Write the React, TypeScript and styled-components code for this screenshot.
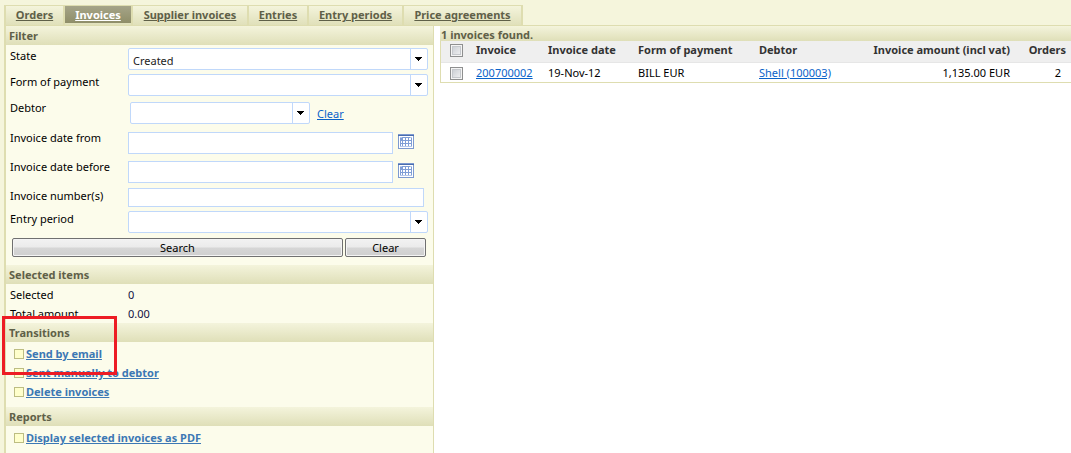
import React from 'react';
import styled, { createGlobalStyle } from 'styled-components';

const GlobalStyle = createGlobalStyle`
  * { box-sizing: border-box; }
  body {
    margin: 0;
    background: #f5f5dc;
    color: #000;
    font: 11px/19px "Noto Sans", "Open Sans", sans-serif;
  }
`;

const Page = styled.div`
  display: flex;
  flex-direction: column;
  min-height: 100vh;
  padding: 5px 0 0 4px;
`;

const Tabs = styled.nav`
  display: flex;
  margin-bottom: -1px;
`;

const TabItem = styled.div<{ $width: number }>`
  width: ${p => p.$width}px;
  height: 21px;
  border: solid #deddb0;
  border-width: 1px 2px 0 0;
  background: linear-gradient(#f4f4dc, #dfdfb8);
  &:first-child { border-left-width: 2px; }
`;

const Tab = styled.a<{ $active?: boolean }>`
  display: block;
  height: 17px;
  line-height: 18px;
  text-align: center;
  white-space: nowrap;
  font-weight: 700;
  color: ${p => (p.$active ? '#fff' : '#5f6048')};
  background: ${p => (p.$active ? 'linear-gradient(#a5a488, #8f8e68)' : 'none')};
`;

const Columns = styled.div`
  display: flex;
  flex: 1;
`;

const Sidebar = styled.aside`
  position: relative;
  flex: 0 0 429px;
  border: solid #deddb0;
  border-width: 1px 1px 0 2px;
  background: #fcfceb;
`;

const Heading = styled.h2`
  margin: 0;
  padding-left: 3px;
  height: 19px;
  font-size: 11px;
  line-height: 19px;
  color: #5f6048;
  background: linear-gradient(#f4f4dc, #dfdfb8);
`;

const Form = styled.form`
  padding: 1px 5px 8px 4px;
`;

const Row = styled.div<{ $height: number }>`
  display: grid;
  grid-template-columns: 118px 1fr;
  height: ${p => p.$height}px;
`;

const Label = styled.label`
  line-height: 20px;
`;

const Controls = styled.div<{ $indent?: number }>`
  display: flex;
  align-items: center;
  gap: 5px;
  padding-left: ${p => p.$indent ?? 0}px;
`;

const TextInput = styled.input<{ $width: number; $height: number }>`
  width: ${p => p.$width}px;
  height: ${p => p.$height}px;
  padding: 0 4px;
  border: 1px solid #c0d8fa;
  background: #fff;
  font: inherit;
`;

const SelectBox = styled.div<{ $width: number }>`
  display: grid;
  grid-template-columns: 1fr 17px;
  width: ${p => p.$width}px;
  height: 22px;
  border: 1px solid #c0d8fa;
  border-radius: 2px;
  background: #fff;
`;

const Select = styled.select`
  grid-area: 1 / 1 / 2 / 3;
  appearance: none;
  min-width: 0;
  height: 20px;
  padding: 3px 18px 0 4px;
  border: 0;
  background: none;
  color: #222;
  font: inherit;
  line-height: 17px;
`;

const ArrowCell = styled.span`
  grid-area: 1 / 2 / 2 / 3;
  display: flex;
  align-items: center;
  padding-left: 4px;
  border-left: 1px solid #c0d8fa;
  pointer-events: none;
`;

const ClearLink = styled.a`
  margin-left: 2px;
  color: #0a63c9;
`;

const IconButton = styled.button`
  display: flex;
  padding: 0 0 2px;
  border: 0;
  background: none;
`;

const Buttons = styled.div`
  display: grid;
  grid-template-columns: 1fr 81px;
  gap: 2px;
  padding: 3px 2px 0;
`;

const Button = styled.button`
  height: 19px;
  padding: 0;
  border: 1px solid #707070;
  border-radius: 2px;
  background: linear-gradient(#f2f2f2 0%, #ebebeb 48%, #d6d6d6 52%, #cfcfcf 100%);
  box-shadow: inset 0 0 0 1px #f4f4f4;
  font: inherit;
  line-height: 17px;
`;

const Summary = styled.dl`
  display: grid;
  grid-template-columns: 118px 1fr;
  grid-auto-rows: 19px;
  height: 39px;
  margin: 0;
  padding: 1px 0 0 4px;
`;

const Value = styled.dd`
  margin: 0;
  color: #111142;
`;

const Links = styled.ul`
  margin: 0;
  padding: 2px 0 6px 8px;
  list-style: none;
`;

const LinkItem = styled.li`
  display: flex;
  align-items: center;
  gap: 2px;
  height: 19px;
  &::before {
    content: '';
    width: 8px;
    height: 8px;
    border: 1px solid #bdbd82;
    background: #ffffcc;
  }
`;

const ActionLink = styled.a`
  font-weight: 700;
  color: #3c78b4;
`;

const TransitionGroup = styled.section`
  position: relative;
`;

const Highlight = styled.div`
  position: absolute;
  top: -7px;
  left: -4px;
  width: 115px;
  height: 59px;
  border: 3px solid #ed1c24;
  pointer-events: none;
`;

const Results = styled.main`
  flex: 1;
  min-width: 0;
  padding-left: 6px;
  background: linear-gradient(#fff, #fff) content-box, #fff;
  border-top: 1px solid #deddb0;
`;

const Table = styled.table`
  width: 100%;
  table-layout: fixed;
  border-collapse: separate;
  border-spacing: 0;
  border: solid #deddb0;
  border-width: 0 0 1px 1px;
  caption {
    padding-left: 1px;
    height: 15px;
    line-height: 17px;
    text-align: left;
    font-weight: 700;
    color: #5f6048;
    background: linear-gradient(#f4f4dc, #dfdfb8);
  }
`;

const HeadCell = styled.th<{ $right?: boolean }>`
  height: 22px;
  padding: 0 ${p => (p.$right ? 5 : 0)}px 3px 6px;
  border-bottom: 1px solid #e6e6e6;
  background: #efefef;
  text-align: ${p => (p.$right ? 'right' : 'left')};
  line-height: 18px;
  white-space: nowrap;
  color: #333;
`;

const Cell = styled.td<{ $right?: number }>`
  height: 19px;
  padding: 0 ${p => p.$right ?? 0}px 0 6px;
  text-align: ${p => (p.$right ? 'right' : 'left')};
  line-height: 18px;
  white-space: nowrap;
  a { color: #0a63c9; }
`;

const Check = styled.input`
  appearance: none;
  display: block;
  width: 13px;
  height: 13px;
  margin: 1px 0 0 3px;
  border: 1px solid #8e8f8f;
  background: linear-gradient(135deg, #c4c8ce, #f6f6f6);
  box-shadow: inset 0 0 0 1px #f4f4f4, inset 0 0 0 2px #c5c8cc;
`;

const Col = styled.col<{ $width?: number }>`
  width: ${p => (p.$width ? `${p.$width}px` : 'auto')};
`;

function Dropdown({ id, width, value = '' }: { id: string; width: number; value?: string }) {
  return (
    <SelectBox $width={width}>
      <Select id={id} defaultValue={value}>
        <option value={value}>{value}</option>
      </Select>
      <ArrowCell>
        <svg width="7" height="4" viewBox="0 0 7 4" shapeRendering="crispEdges" aria-hidden="true">
          <path d="M0 0h7v1h-1v1h-1v1h-1v1h-1v-1h-1v-1h-1v-1h-1z" />
        </svg>
      </ArrowCell>
    </SelectBox>
  );
}

function CalendarButton({ label }: { label: string }) {
  return (
    <IconButton type="button" aria-label={label}>
      <svg width="16" height="15" viewBox="0 0 16 15" shapeRendering="crispEdges" aria-hidden="true">
        <path d="M0 0h16v15H0z" fill="#7d9ad0" />
        <path d="M0 1h16v1H0z" fill="#4a6dae" />
        <path d="M1 2h14v12H1z" fill="#fff" />
        <path d="M2 3h12v10H2z" fill="#7f9ed6" />
        <path d="M2 3h2v1H2zM12 3h2v1h-2zM2 12h12v1H2z" fill="#b4c7ea" />
        <path d="M5 4h2v2H5zM8 4h2v2H8zM11 4h2v2h-2zM3 7h1v2H3zM5 7h2v2H5zM8 7h2v2H8zM11 7h2v2h-2zM3 10h1v2H3zM5 10h2v2H5zM8 10h2v2H8zM11 10h2v2h-2z" fill="#fff" />
      </svg>
    </IconButton>
  );
}

const tabs = [
  { name: 'Orders', width: 61 },
  { name: 'Invoices', width: 68 },
  { name: 'Supplier invoices', width: 116 },
  { name: 'Entries', width: 60 },
  { name: 'Entry periods', width: 95 },
  { name: 'Price agreements', width: 119 },
];

export default function App() {
  return (
    <Page>
      <GlobalStyle />
      <Tabs>
        {tabs.map(tab => (
          <TabItem key={tab.name} $width={tab.width}>
            <Tab href="#" $active={tab.name === 'Invoices'}>{tab.name}</Tab>
          </TabItem>
        ))}
      </Tabs>
      <Columns>
        <Sidebar>
          <Heading>Filter</Heading>
          <Form>
            <Row $height={26}>
              <Label htmlFor="state">State</Label>
              <Controls><Dropdown id="state" width={300} value="Created" /></Controls>
            </Row>
            <Row $height={26}>
              <Label htmlFor="payment">Form of payment</Label>
              <Controls><Dropdown id="payment" width={300} /></Controls>
            </Row>
            <Row $height={30}>
              <Label htmlFor="debtor">Debtor</Label>
              <Controls $indent={2}>
                <Dropdown id="debtor" width={180} />
                <ClearLink href="#">Clear</ClearLink>
              </Controls>
            </Row>
            <Row $height={29}>
              <Label htmlFor="from">Invoice date from</Label>
              <Controls>
                <TextInput id="from" $width={265} $height={22} />
                <CalendarButton label="Pick start date" />
              </Controls>
            </Row>
            <Row $height={29}>
              <Label htmlFor="before">Invoice date before</Label>
              <Controls>
                <TextInput id="before" $width={265} $height={22} />
                <CalendarButton label="Pick end date" />
              </Controls>
            </Row>
            <Row $height={23}>
              <Label htmlFor="number">Invoice number(s)</Label>
              <Controls><TextInput id="number" $width={296} $height={19} /></Controls>
            </Row>
            <Row $height={26}>
              <Label htmlFor="period">Entry period</Label>
              <Controls><Dropdown id="period" width={300} /></Controls>
            </Row>
            <Buttons>
              <Button type="button">Search</Button>
              <Button type="reset">Clear</Button>
            </Buttons>
          </Form>
          <Heading>Selected items</Heading>
          <Summary>
            <dt>Selected</dt>
            <Value>0</Value>
            <dt>Total amount</dt>
            <Value>0.00</Value>
          </Summary>
          <TransitionGroup>
            <Heading>Transitions</Heading>
            <Links>
              <LinkItem><ActionLink href="#">Send by email</ActionLink></LinkItem>
              <LinkItem><ActionLink href="#">Sent manually to debtor</ActionLink></LinkItem>
              <LinkItem><ActionLink href="#">Delete invoices</ActionLink></LinkItem>
            </Links>
            <Highlight />
          </TransitionGroup>
          <Heading>Reports</Heading>
          <Links>
            <LinkItem><ActionLink href="#">Display selected invoices as PDF</ActionLink></LinkItem>
          </Links>
        </Sidebar>
        <Results>
          <Table>
            <caption>1 invoices found.</caption>
            <colgroup>
              <Col $width={29} />
              <Col $width={72} />
              <Col $width={90} />
              <Col $width={121} />
              <Col $width={104} />
              <Col />
              <Col $width={56} />
            </colgroup>
            <thead>
              <tr>
                <HeadCell><Check type="checkbox" aria-label="Select all invoices" /></HeadCell>
                <HeadCell>Invoice</HeadCell>
                <HeadCell>Invoice date</HeadCell>
                <HeadCell>Form of payment</HeadCell>
                <HeadCell>Debtor</HeadCell>
                <HeadCell $right>Invoice amount (incl vat)</HeadCell>
                <HeadCell $right>Orders</HeadCell>
              </tr>
            </thead>
            <tbody>
              <tr>
                <Cell><Check type="checkbox" aria-label="Select invoice 200700002" /></Cell>
                <Cell><a href="#">200700002</a></Cell>
                <Cell>19-Nov-12</Cell>
                <Cell>BILL EUR</Cell>
                <Cell><a href="#">Shell (100003)</a></Cell>
                <Cell $right={5}>1,135.00 EUR</Cell>
                <Cell $right={10}>2</Cell>
              </tr>
            </tbody>
          </Table>
        </Results>
      </Columns>
    </Page>
  );
}
